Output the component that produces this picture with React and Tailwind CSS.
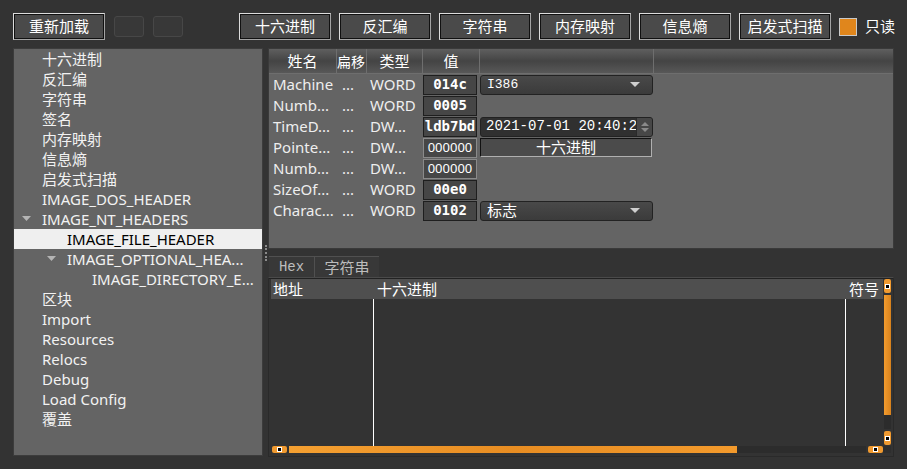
import React from 'react';

const sans = { fontFamily: '"Noto Sans", "Noto Sans CJK SC", sans-serif' };
const mono = { fontFamily: '"DejaVu Sans Mono", "Noto Sans CJK SC", monospace' };
const serifMono = { fontFamily: '"Liberation Mono", "Noto Sans CJK SC", monospace' };

const topButtons = ['十六进制', '反汇编', '字符串', '内存映射', '信息熵', '启发式扫描'];

const tree = [
  { label: '十六进制', level: 0 },
  { label: '反汇编', level: 0 },
  { label: '字符串', level: 0 },
  { label: '签名', level: 0 },
  { label: '内存映射', level: 0 },
  { label: '信息熵', level: 0 },
  { label: '启发式扫描', level: 0 },
  { label: 'IMAGE_DOS_HEADER', level: 0 },
  { label: 'IMAGE_NT_HEADERS', level: 0, open: true },
  { label: 'IMAGE_FILE_HEADER', level: 1, selected: true },
  { label: 'IMAGE_OPTIONAL_HEA...', level: 1, open: true },
  { label: 'IMAGE_DIRECTORY_E...', level: 2 },
  { label: '区块', level: 0 },
  { label: 'Import', level: 0 },
  { label: 'Resources', level: 0 },
  { label: 'Relocs', level: 0 },
  { label: 'Debug', level: 0 },
  { label: 'Load Config', level: 0 },
  { label: '覆盖', level: 0 },
];

const indent = { 0: 'pl-[3px]', 1: 'pl-[28px]', 2: 'pl-[53px]' };

const rows = [
  { name: 'Machine', type: 'WORD', value: '014c', bold: true, widget: 'combo', text: 'I386', monoText: true },
  { name: 'Numb...', type: 'WORD', value: '0005', bold: true },
  { name: 'TimeD...', type: 'DW...', value: 'ldb7bd', bold: true, widget: 'date' },
  { name: 'Pointe...', type: 'DW...', value: '000000', widget: 'button' },
  { name: 'Numb...', type: 'DW...', value: '000000' },
  { name: 'SizeOf...', type: 'WORD', value: '00e0', bold: true },
  { name: 'Charac...', type: 'WORD', value: '0102', bold: true, widget: 'combo', text: '标志' },
];

function Arrow() {
  return (
    <svg width="10" height="6" viewBox="0 0 10 6">
      <path d="M0 0 L10 0 L5 5 Z" fill="#cfcfcf" />
    </svg>
  );
}

function ToolButton({ label, className }) {
  return (
    <button
      className={`h-[27px] text-[15px] text-white bg-[#4a4a4a] border border-[#dcdcdc] border-r-[#a4a4a4] border-b-[#a4a4a4] shadow-[inset_0_0_0_1px_#111] flex items-center justify-center ${className}`}
      style={sans}
    >
      {label}
    </button>
  );
}

function Widget({ row }) {
  if (row.widget === 'combo') {
    return (
      <div className="w-[173px] h-[20px] ml-[3px] rounded-[3px] border border-[#222] bg-linear-to-b from-[#494949] to-[#3b3b3b] flex items-center justify-between pl-[6px] pr-[12px]">
        <span className={row.monoText ? 'text-[13px] text-white' : 'text-[15px] text-white'} style={row.monoText ? serifMono : sans}>
          {row.text}
        </span>
        <Arrow />
      </div>
    );
  }
  if (row.widget === 'date') {
    return (
      <div className="w-[173px] h-[20px] ml-[3px] rounded-[3px] border border-[#222] bg-[#303030] flex items-center overflow-hidden">
        <span className="flex-1 overflow-hidden whitespace-nowrap pl-[5px] text-[14px] text-white" style={serifMono}>
          2021-07-01 20:40:29
        </span>
        <div className="w-[16px] h-full bg-[#474747] border-l border-[#2a2a2a] flex flex-col items-center justify-center gap-[2px]">
          <svg width="8" height="4" viewBox="0 0 8 4"><path d="M0 4 L8 4 L4 0 Z" fill="#8a8a8a" /></svg>
          <svg width="8" height="4" viewBox="0 0 8 4"><path d="M0 0 L8 0 L4 4 Z" fill="#8a8a8a" /></svg>
        </div>
      </div>
    );
  }
  if (row.widget === 'button') {
    return (
      <div className="w-[172px] h-[19px] ml-[3px] bg-[#4b4b4b] border border-[#111] border-r-[#b0b0b0] border-b-[#b0b0b0] flex items-center justify-center text-[15px] text-white" style={sans}>
        十六进制
      </div>
    );
  }
  return null;
}

function ScrollDot() {
  return <div className="w-[3px] h-[3px] bg-black border border-white box-content" />;
}

export default function App() {
  return (
    <div className="w-[907px] h-[469px] bg-[#333333] overflow-hidden" style={sans}>
      {/* toolbar */}
      <div className="flex items-center pt-[13px] pl-[13px]">
        <ToolButton label="重新加载" className="w-[92px]" />
        <div className="w-[30px] h-[21px] ml-[9px] rounded-[3px] border border-[#474747] bg-[#383838]" />
        <div className="w-[30px] h-[21px] ml-[9px] rounded-[3px] border border-[#474747] bg-[#383838]" />
        <div className="flex gap-[8px] ml-[56px]">
          {topButtons.map((b) => (
            <ToolButton key={b} label={b} className="w-[92px]" />
          ))}
        </div>
        <div className="w-[18px] h-[18px] ml-[8px] bg-[#e0861c] border border-[#c9c9c9]" />
        <span className="ml-[8px] text-[15px] text-white">只读</span>
      </div>

      {/* main area */}
      <div className="flex mt-[8px] ml-[13px]">
        {/* tree */}
        <div className="w-[250px] h-[408px] bg-[#646464] border border-[#3c3c3c]">
          {tree.map((item, i) => (
            <div
              key={i}
              className={`h-[20px] flex items-center whitespace-nowrap text-[15px] ${indent[item.level]} ${item.selected ? 'bg-[#efefef] text-black' : 'text-[#f2f2f2]'}`}
            >
              <div className="w-[25px] h-full flex items-center pl-[5px]">
                {item.open && (
                  <svg width="9" height="6" viewBox="0 0 9 6">
                    <path d="M0 0 L9 0 L4.5 5 Z" fill="#b4b4b4" />
                  </svg>
                )}
              </div>
              <span>{item.label}</span>
            </div>
          ))}
        </div>

        {/* splitter */}
        <div className="w-[5px] flex items-center justify-center">
          <div className="h-[16px] border-l-2 border-dotted border-[#8a8a8a]" />
        </div>

        {/* right side */}
        <div className="w-[626px] flex flex-col">
          {/* field table */}
          <div className="h-[201px] bg-[#646464] border border-[#3a3a3a] flex flex-col">
            <div className="h-[25px] flex text-[15px] text-white bg-linear-to-b from-[#5f5f5f] via-[#444444] to-[#585858] border-b border-[#6e6e6e]">
              <div className="w-[68px] flex items-center justify-center border-r border-[#6e6e6e]">姓名</div>
              <div className="w-[30px] flex items-center overflow-hidden whitespace-nowrap border-r border-[#6e6e6e] text-[14px]">扁移</div>
              <div className="w-[56px] flex items-center justify-center border-r border-[#6e6e6e]">类型</div>
              <div className="w-[57px] flex items-center justify-center border-r border-[#6e6e6e]">值</div>
              <div className="w-[174px] border-r border-[#6e6e6e]" />
              <div className="flex-1" />
            </div>
            {rows.map((r, i) => (
              <div key={i} className="h-[21px] flex items-center text-[15px] text-[#eeeeee]">
                <div className="w-[68px] pl-[4px] whitespace-nowrap overflow-hidden">{r.name}</div>
                <div className="w-[30px] pl-[5px]">...</div>
                <div className="w-[55px] pl-[3px] whitespace-nowrap">{r.type}</div>
                <div
                  className={`w-[54px] h-[20px] ml-[1px] bg-[#464646] border border-[#1e1e1e] flex items-center justify-center overflow-hidden text-white ${r.bold ? 'font-bold text-[14px]' : 'text-[13px] border-[#8a8a8a] bg-[#3e3e3e]'}`}
                  style={r.bold ? mono : sans}
                >
                  {r.value}
                </div>
                <Widget row={r} />
              </div>
            ))}
          </div>

          {/* tabs */}
          <div className="h-[21px] mt-[7px] flex">
            <div className="w-[45px] ml-[1px] bg-[#383838] border-t border-[#505050] flex items-center justify-center text-[14px] text-[#bdbdbd]" style={serifMono}>
              Hex
            </div>
            <div className="w-[65px] bg-[#383838] border-t border-l border-[#505050] flex items-center justify-center text-[15px] text-[#bdbdbd]">
              字符串
            </div>
          </div>

          {/* hex view */}
          <div className="h-[180px] bg-[#333333] border border-[#2a2a2a] border-t-[#4a4a4a] shadow-[inset_0_1px_0_#222] flex flex-col pl-[2px] pt-[1px] pr-[2px]">
            <div className="flex flex-1">
              <div className="flex-1 flex flex-col">
                <div className="h-[20px] bg-[#4f4f4f] flex items-center text-[15px] text-white">
                  <div className="w-[103px] pl-[2px]">地址</div>
                  <div className="w-[472px] pl-[3px]">十六进制</div>
                  <div className="flex-1 pl-[3px]">符号</div>
                </div>
                <div className="flex flex-1">
                  <div className="w-[103px] border-r border-white" />
                  <div className="w-[472px] border-r border-white" />
                  <div className="flex-1" />
                </div>
              </div>
              {/* vertical scrollbar */}
              <div className="w-[7px] ml-[1px] flex flex-col pb-[1px]">
                <div className="h-[14px] rounded-[2px] bg-[#f09a30] flex items-center justify-center">
                  <ScrollDot />
                </div>
                <div className="flex-1 mt-[2px] flex flex-col">
                  <div className="h-[120px] bg-linear-to-r from-[#f39c2e] to-[#d8821c]" />
                  <div className="flex-1 bg-[#2c2c2c]" />
                </div>
                <div className="h-[14px] mt-[2px] rounded-[2px] bg-[#f09a30] flex items-center justify-center">
                  <ScrollDot />
                </div>
              </div>
            </div>
            {/* horizontal scrollbar */}
            <div className="h-[7px] mb-[3px] flex items-stretch">
              <div className="w-[15px] ml-[1px] rounded-[2px] bg-[#f09a30] flex items-center justify-center">
                <ScrollDot />
              </div>
              <div className="flex-1 ml-[2px] flex">
                <div className="w-[448px] bg-linear-to-r from-[#f5a031] via-[#e88d22] to-[#f39a2c]" />
                <div className="flex-1 bg-[#2c2c2c]" />
              </div>
              <div className="w-[15px] ml-[2px] rounded-[2px] bg-[#f09a30] flex items-center justify-center">
                <ScrollDot />
              </div>
              <div className="w-[8px] bg-[#2e2e2e]" />
            </div>
          </div>
        </div>
      </div>
    </div>
  );
}
